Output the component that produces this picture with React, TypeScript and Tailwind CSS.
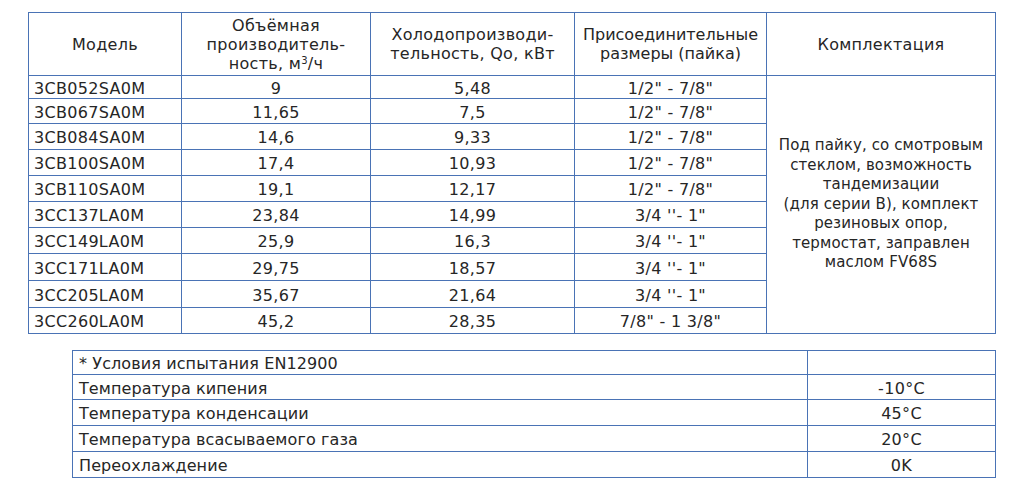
const MODELS = [
  { name: "3CB052SA0M", vol: "9", cap: "5,48", size: "1/2\" - 7/8\"", h: "h-[23px]" },
  { name: "3CB067SA0M", vol: "11,65", cap: "7,5", size: "1/2\" - 7/8\"", h: "h-[25px]" },
  { name: "3CB084SA0M", vol: "14,6", cap: "9,33", size: "1/2\" - 7/8\"", h: "h-[26px]" },
  { name: "3CB100SA0M", vol: "17,4", cap: "10,93", size: "1/2\" - 7/8\"", h: "h-[26px]" },
  { name: "3CB110SA0M", vol: "19,1", cap: "12,17", size: "1/2\" - 7/8\"", h: "h-[26px]" },
  { name: "3CC137LA0M", vol: "23,84", cap: "14,99", size: "3/4 ''- 1\"", h: "h-[26px]" },
  { name: "3CC149LA0M", vol: "25,9", cap: "16,3", size: "3/4 ''- 1\"", h: "h-[26px]" },
  { name: "3CC171LA0M", vol: "29,75", cap: "18,57", size: "3/4 ''- 1\"", h: "h-[27px]" },
  { name: "3CC205LA0M", vol: "35,67", cap: "21,64", size: "3/4 ''- 1\"", h: "h-[27px]" },
  { name: "3CC260LA0M", vol: "45,2", cap: "28,35", size: "7/8\" - 1 3/8\"", h: "h-[26px]" },
];

const CONDITIONS = [
  { label: "* Условия испытания EN12900", value: "", h: "h-[24px]" },
  { label: "Температура кипения", value: "-10°C", h: "h-[25px]" },
  { label: "Температура конденсации", value: "45°C", h: "h-[26px]" },
  { label: "Температура всасываемого газа", value: "20°C", h: "h-[26px]" },
  { label: "Переохлаждение", value: "0K", h: "h-[26px]" },
];

const cell = "border border-[#4a73b5] p-0";

export default function App() {
  return (
    <div className="w-[1024px] h-[496px] bg-white text-[#262626] font-['DejaVu_Sans',sans-serif] text-[16px] tracking-[0.3px] leading-[19px] overflow-hidden">
      <div className="pt-[12px] pl-[28px]">
        <table className="border-collapse table-fixed w-[967px]">
          <colgroup>
            <col className="w-[153px]" />
            <col className="w-[189px]" />
            <col className="w-[204px]" />
            <col className="w-[192px]" />
            <col className="w-[229px]" />
          </colgroup>
          <thead>
            <tr className="h-[63px] text-center">
              <th className={`${cell} font-normal`}>Модель</th>
              <th className={`${cell} font-normal`}>
                Объёмная<br />производитель-<br />ность, м<sup className="text-[10px]">3</sup>/ч
              </th>
              <th className={`${cell} font-normal`}>
                Холодопроизводи-<br />тельность, Qo, кВт
              </th>
              <th className={`${cell} font-normal whitespace-nowrap tracking-normal`}>
                Присоединительные<br />размеры (пайка)
              </th>
              <th className={`${cell} font-normal`}>Комплектация</th>
            </tr>
          </thead>
          <tbody>
            {MODELS.map((m, i) => (
              <tr key={m.name} className={m.h}>
                <td className={`${cell} pl-[5px] pt-[2px]`}>{m.name}</td>
                <td className={`${cell} text-center pt-[2px]`}>{m.vol}</td>
                <td className={`${cell} text-center pt-[2px]`}>{m.cap}</td>
                <td className={`${cell} text-center pt-[2px]`}>{m.size}</td>
                {i === 0 && (
                  <td rowSpan={MODELS.length} className={`${cell} text-center text-[15px] leading-[19.6px] tracking-[0.1px]`}>
                    Под пайку, со смотровым<br />стеклом, возможность<br />тандемизации<br />
                    (для серии В), комплект<br />резиновых опор,<br />термостат, заправлен<br />маслом FV68S
                  </td>
                )}
              </tr>
            ))}
          </tbody>
        </table>
      </div>
      <div className="pt-[16px] pl-[72px]">
        <table className="border-collapse table-fixed w-[923px]">
          <colgroup>
            <col className="w-[735px]" />
            <col className="w-[188px]" />
          </colgroup>
          <tbody>
            {CONDITIONS.map((c) => (
              <tr key={c.label} className={c.h}>
                <td className={`${cell} pl-[6px] pt-[2px] tracking-[0.1px]`}>{c.label}</td>
                <td className={`${cell} text-center pt-[2px]`}>{c.value}</td>
              </tr>
            ))}
          </tbody>
        </table>
      </div>
    </div>
  );
}
